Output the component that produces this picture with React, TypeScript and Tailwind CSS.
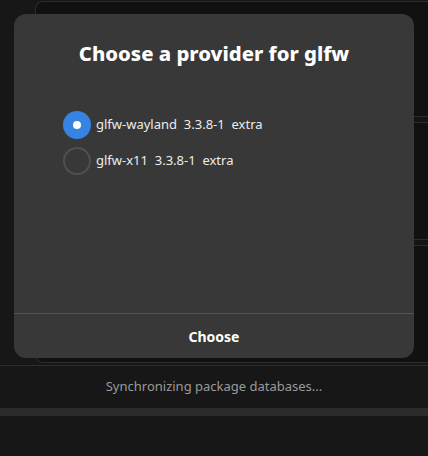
const providers = [
  { name: 'glfw-wayland', version: '3.3.8-1', repo: 'extra', selected: true },
  { name: 'glfw-x11', version: '3.3.8-1', repo: 'extra', selected: false },
]

function Radio({ checked }: { checked: boolean }) {
  if (checked) {
    return (
      <div className="w-[28px] h-[28px] rounded-full bg-[#3584e4] flex items-center justify-center">
        <div className="w-[8px] h-[8px] rounded-full bg-white" />
      </div>
    )
  }
  return <div className="w-[28px] h-[28px] rounded-full border-2 border-[#505050]" />
}

export default function App() {
  return (
    <div
      className="relative w-[428px] h-[456px] overflow-hidden bg-[#171717] text-white"
      style={{ fontFamily: '"Noto Sans", "Open Sans", sans-serif' }}
    >
      {/* background window */}
      <div className="pt-[1px] pl-[35px]">
        <div className="h-[362px] rounded-l-[8px] border border-r-0 border-[#2c2c2c] bg-[#111111] flex flex-col">
          <div className="h-[114px]" />
          <div className="h-[7px] border-y border-[#2c2c2c] bg-[#141414]" />
          <div className="h-[116px]" />
          <div className="h-[7px] border-y border-[#2c2c2c] bg-[#141414]" />
        </div>
      </div>
      <div className="mt-[2px] border-t border-[#2c2c2c] h-[43px] flex items-center justify-center">
        <span className="text-[13px] text-[#9a9a9a]">Synchronizing package databases...</span>
      </div>
      <div className="h-[8px] bg-[#2b2b2b]" />

      {/* dialog */}
      <div className="absolute left-[14px] top-[14px] w-[400px] h-[344px] rounded-[12px] bg-[#383838] flex flex-col">
        <h1 className="pt-[25px] text-center text-[20.3px] font-extrabold leading-[28px]">Choose a provider for glfw</h1>
        <div className="mt-[44px] pl-[49px] flex flex-col gap-[8px]">
          {providers.map((p) => (
            <div key={p.name} className="flex items-center gap-[5px]">
              <Radio checked={p.selected} />
              <span className="text-[13px] text-[#ececec] whitespace-pre">
                {p.name}  {p.version}  {p.repo}
              </span>
            </div>
          ))}
        </div>
        <div className="mt-auto border-t border-[#545454] h-[45px] flex items-center justify-center">
          <span className="text-[14px] font-bold">Choose</span>
        </div>
      </div>
    </div>
  )
}
